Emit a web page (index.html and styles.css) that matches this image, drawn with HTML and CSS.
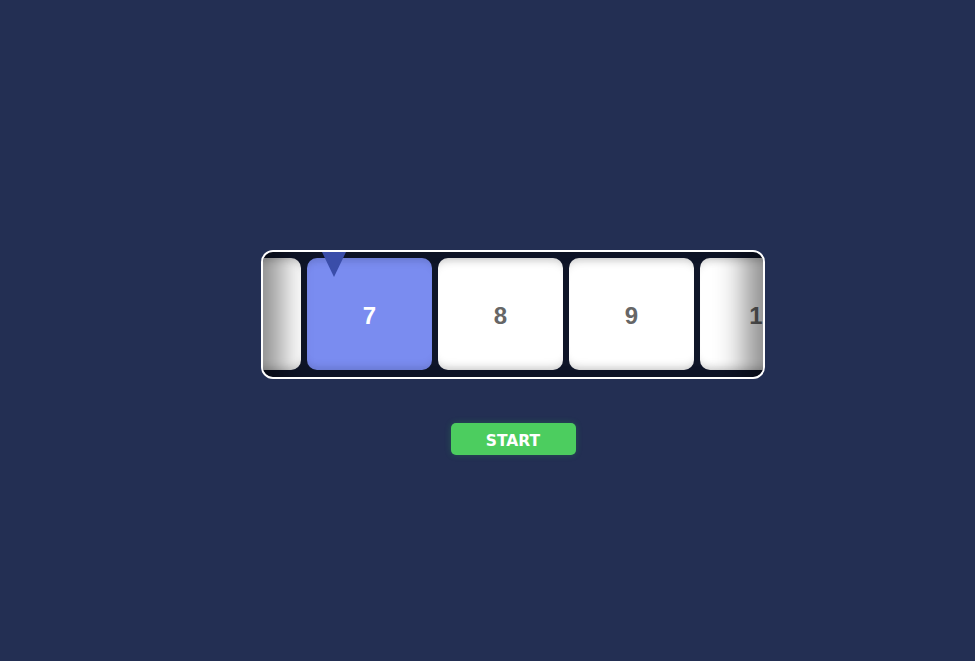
FILE: index.html
```html
<!DOCTYPE html>
<html>
<head>
<meta charset="utf-8">
<link rel="stylesheet" href="styles.css">
</head>
<body>
<div class="stage">
  <div class="reel">
    <div class="track">
      <div class="card">6</div>
      <div class="card active">7</div>
      <div class="card">8</div>
      <div class="card">9</div>
      <div class="card">10</div>
    </div>
    <div class="shade"></div>
    <div class="pointer"></div>
  </div>
  <button class="start">START</button>
</div>
</body>
</html>
```
FILE: styles.css
```css
html, body {
  margin: 0;
  height: 100%;
  background: #232f53;
}
.stage {
  display: flex;
  flex-direction: column;
  align-items: center;
  padding-top: 250px;
  padding-left: 51px;
}
.reel {
  position: relative;
  width: 504px;
  height: 129px;
  box-sizing: border-box;
  border: 2px solid #ffffff;
  border-radius: 12px;
  background: #0f1528;
  overflow: hidden;
}
.track {
  display: flex;
  gap: 6px;
  padding-top: 6px;
  margin-left: -87px;
}
.card {
  flex: 0 0 125px;
  height: 112px;
  padding-top: 3px;
  box-sizing: border-box;
  border-radius: 10px;
  background: #ffffff;
  display: flex;
  align-items: center;
  justify-content: center;
  font-family: "Liberation Sans", Arial, sans-serif;
  font-weight: bold;
  font-size: 24px;
  color: #666666;
  box-shadow: inset 0 10px 10px -8px rgba(0,0,0,0.22), inset 0 -10px 10px -8px rgba(0,0,0,0.22);
}
.card.active {
  background: #7a8cf0;
  color: #ffffff;
  box-shadow: inset 0 10px 10px -8px rgba(0,0,0,0.15), inset 0 -10px 10px -8px rgba(0,0,0,0.15);
}
.shade {
  position: absolute;
  inset: 0;
  pointer-events: none;
  box-shadow: inset 40px 0 30px -22px rgba(0,0,0,0.45), inset -40px 0 30px -22px rgba(0,0,0,0.45);
}
.pointer {
  position: absolute;
  top: 0;
  left: 59px;
  width: 0;
  height: 0;
  border-left: 12px solid transparent;
  border-right: 12px solid transparent;
  border-top: 25px solid #3a4da9;
}
.start {
  margin-top: 44px;
  width: 125px;
  height: 32px;
  border: none;
  border-radius: 5px;
  background: #4ccd5f;
  color: #ffffff;
  font-family: "DejaVu Sans", Verdana, sans-serif;
  font-weight: bold;
  font-size: 15.5px;
  box-shadow: 0 0 6px rgba(40,200,80,0.25);
  padding: 3px 0 0;
}
```
